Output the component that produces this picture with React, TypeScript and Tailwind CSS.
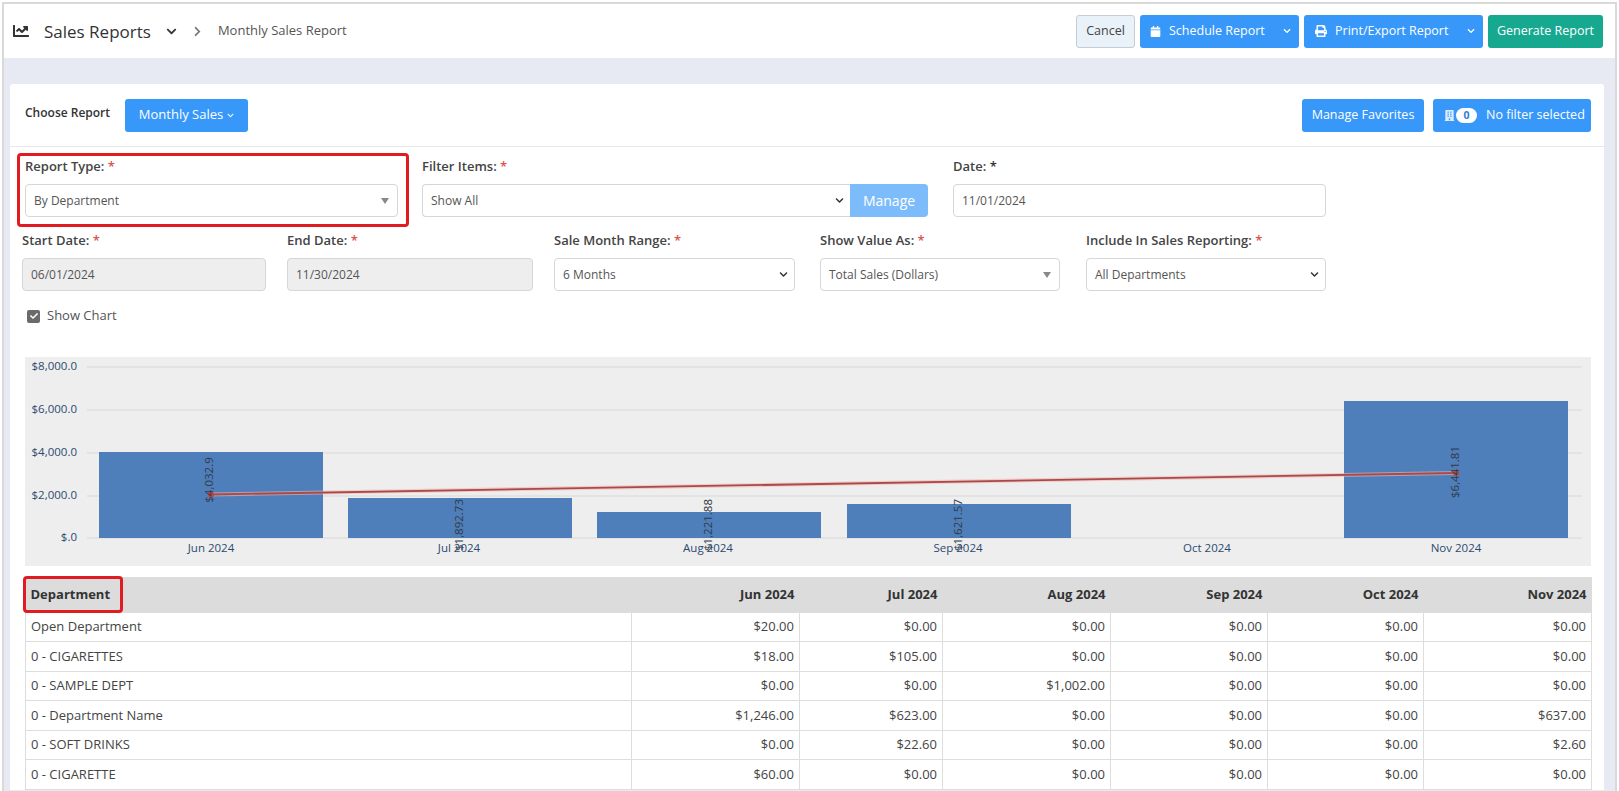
import { FC, ReactNode } from 'react';
import { FaBuilding, FaCalendar, FaChartLine, FaCheck, FaChevronDown, FaChevronRight, FaPrint } from 'react-icons/fa';

const months = ['Jun 2024', 'Jul 2024', 'Aug 2024', 'Sep 2024', 'Oct 2024', 'Nov 2024'];

const rows = [
  ['Open Department', '$20.00', '$0.00', '$0.00', '$0.00', '$0.00', '$0.00'],
  ['0 - CIGARETTES', '$18.00', '$105.00', '$0.00', '$0.00', '$0.00', '$0.00'],
  ['0 - SAMPLE DEPT', '$0.00', '$0.00', '$1,002.00', '$0.00', '$0.00', '$0.00'],
  ['0 - Department Name', '$1,246.00', '$623.00', '$0.00', '$0.00', '$0.00', '$637.00'],
  ['0 - SOFT DRINKS', '$0.00', '$22.60', '$0.00', '$0.00', '$0.00', '$2.60'],
  ['0 - CIGARETTE', '$60.00', '$0.00', '$0.00', '$0.00', '$0.00', '$0.00'],
];

const bars = [
  { x: 74, top: 95, cx: 184, cy: 123, label: '$4,032.9' },
  { x: 323, top: 141, cx: 434, cy: 168, label: '$1,892.73' },
  { x: 572, top: 155, cx: 683, cy: 168, label: '$1,221.88' },
  { x: 822, top: 147, cx: 933, cy: 168, label: '$1,621.57' },
  { x: 1319, top: 44, cx: 1430, cy: 115, label: '$6,441.81' },
];

const Label: FC<{ text: string; star?: string }> = ({ text, star = 'text-[#d9534f]' }) => (
  <div className="h-[18px] text-[13px] leading-[18px] font-semibold text-[#444] whitespace-nowrap">
    {text}: <span className={star}>*</span>
  </div>
);

const Box: FC<{ children: ReactNode; className?: string }> = ({ children, className = '' }) => (
  <div
    className={`mt-[9px] h-[33px] flex items-center justify-between pl-[8px] pr-[6px] border border-[#d6d6d6] rounded-[4px] text-[12px] text-[#555] ${className}`}
  >
    {children}
  </div>
);

const Chevron = () => <FaChevronDown className="text-[9px] text-[#333]" />;
const Caret = () => <span className="mr-[2px] w-0 h-0 border-x-[4px] border-x-transparent border-t-[6px] border-t-[#888]" />;

const Chart = () => (
  <svg viewBox="0 0 1566 209" className="block w-[1566px] h-[209px]" fontFamily="'Open Sans', sans-serif">
    {[10, 53, 96, 139, 181].map((y) => (
      <line key={y} x1="62" x2="1557" y1={y} y2={y} stroke="#d8d8d8" />
    ))}
    {['$8,000.0', '$6,000.0', '$4,000.0', '$2,000.0', '$.0'].map((t, i) => (
      <text key={t} x="52" y={[13, 56, 99, 142, 184][i]} textAnchor="end" fontSize="11.5" fill="#2c4a6e">
        {t}
      </text>
    ))}
    {bars.map((b) => (
      <rect key={b.x} x={b.x} y={b.top} width="224" height={181 - b.top} fill="#4f7fba" />
    ))}
    <line x1="186" y1="137.5" x2="1431" y2="116" stroke="#f3b5b0" strokeWidth="4" opacity="0.6" />
    <line x1="186" y1="137.5" x2="1431" y2="116" stroke="#a84a48" strokeWidth="1.8" />
    <circle cx="186" cy="137.5" r="3" fill="#b8443f" />
    <circle cx="1431" cy="116" r="3" fill="#b8443f" />
    {bars.map((b) => (
      <text
        key={b.label}
        transform={`translate(${b.cx + 4} ${b.cy}) rotate(-90)`}
        textAnchor="middle"
        fontSize="11.5"
        fill="#2f3a48"
      >
        {b.label}
      </text>
    ))}
    {months.map((m, i) => (
      <text key={m} x={[186, 434, 683, 933, 1182, 1431][i]} y="195" textAnchor="middle" fontSize="11.5" fill="#2c4a6e">
        {m}
      </text>
    ))}
  </svg>
);

export default function App() {
  return (
    <div className="h-[791px] w-[1619px] overflow-hidden bg-white font-['Open_Sans',sans-serif]">
      <div className="h-[789px] w-[1615px] ml-[2px] mt-[2px] overflow-hidden border-[2px] border-b-0 border-[#d9d9d9] bg-[#e8eaf3]">
        <div className="h-[54px] bg-white flex items-center justify-between pl-[9px] pr-[12px]">
          <div className="flex items-center text-[#333]">
            <FaChartLine className="text-[16px] -mt-[1px]" />
            <span className="ml-[15px] text-[17px] leading-none">Sales Reports</span>
            <FaChevronDown className="ml-[15px] text-[11px]" />
            <FaChevronRight className="ml-[15px] text-[11px] text-[#777]" />
            <span className="ml-[15px] text-[13px] text-[#555]">Monthly Sales Report</span>
          </div>
          <div className="flex items-center gap-[5px] text-[12.5px] text-white">
            <button className="h-[33px] w-[59px] rounded-[3px] border border-[#c5ccd4] bg-[#e9f1f9] text-[#444]">Cancel</button>
            <button className="h-[33px] w-[159px] rounded-[3px] bg-[#3798f9] flex items-center pl-[10px] pr-[8px]">
              <FaCalendar className="text-[11px]" />
              <span className="ml-[8px]">Schedule Report</span>
              <FaChevronDown className="ml-auto text-[8px]" />
            </button>
            <button className="h-[33px] w-[179px] rounded-[3px] bg-[#3798f9] flex items-center pl-[11px] pr-[8px]">
              <FaPrint className="text-[12px]" />
              <span className="ml-[8px]">Print/Export Report</span>
              <FaChevronDown className="ml-auto text-[8px]" />
            </button>
            <button className="h-[33px] w-[115px] rounded-[3px] bg-[#17a990]">Generate Report</button>
          </div>
        </div>

        <div className="mt-[26px] ml-[6px] w-[1594px] bg-white rounded-t-[3px]">
          <div className="h-[63px] flex items-center justify-between border-b border-[#e8e8e8] pl-[15px] pr-[13px]">
            <div className="flex items-center">
              <span className="text-[12px] font-semibold text-[#333] -mt-[4px]">Choose Report</span>
              <button className="ml-[15px] h-[33px] w-[123px] rounded-[3px] bg-[#3798f9] text-[13px] text-white flex items-center justify-center gap-[4px]">
                Monthly Sales <FaChevronDown className="text-[7px]" />
              </button>
            </div>
            <div className="flex items-center gap-[9px] text-[12.5px] text-white">
              <button className="h-[33px] w-[122px] rounded-[3px] bg-[#3798f9]">Manage Favorites</button>
              <button className="h-[33px] w-[158px] rounded-[3px] bg-[#3798f9] flex items-center pl-[11px]">
                <FaBuilding className="text-[11px] text-[#dfeeff]" />
                <span className="ml-[1px] h-[15px] w-[21px] rounded-full bg-white text-[#2c7fd6] text-[10.5px] leading-[15px] font-bold">0</span>
                <span className="ml-[9px]">No filter selected</span>
              </button>
            </div>
          </div>

          <div className="mt-[6px] ml-[7px] flex">
            <div className="w-[392px] h-[74px] border-[3px] border-[#e01b22] rounded-[4px] pl-[5px] pr-[8px] pt-[1px]">
              <Label text="Report Type" />
              <Box>
                By Department
                <Caret />
              </Box>
            </div>
            <div className="ml-[13px] w-[506px] pt-[4px]">
              <Label text="Filter Items" />
              <div className="mt-[9px] h-[33px] flex">
                <div className="flex-1 flex items-center justify-between pl-[8px] pr-[6px] border border-r-0 border-[#d6d6d6] rounded-l-[4px] text-[12px] text-[#555]">
                  Show All
                  <Chevron />
                </div>
                <button className="w-[78px] rounded-r-[4px] bg-[#7dbcfb] text-[14px] text-white">Manage</button>
              </div>
            </div>
            <div className="ml-[25px] w-[373px] pt-[4px]">
              <Label text="Date" star="text-[#333]" />
              <Box>11/01/2024</Box>
            </div>
          </div>

          <div className="mt-[4px] ml-[12px] flex">
            <div className="w-[244px]">
              <Label text="Start Date" />
              <Box className="bg-[#eeeeee]">06/01/2024</Box>
            </div>
            <div className="ml-[21px] w-[246px]">
              <Label text="End Date" />
              <Box className="bg-[#eeeeee]">11/30/2024</Box>
            </div>
            <div className="ml-[21px] w-[241px]">
              <Label text="Sale Month Range" />
              <Box>
                6 Months
                <Chevron />
              </Box>
            </div>
            <div className="ml-[25px] w-[240px]">
              <Label text="Show Value As" />
              <Box>
                Total Sales (Dollars)
                <Caret />
              </Box>
            </div>
            <div className="ml-[26px] w-[240px]">
              <Label text="Include In Sales Reporting" />
              <Box>
                All Departments
                <Chevron />
              </Box>
            </div>
          </div>

          <div className="mt-[16px] ml-[17px] h-[18px] flex items-center text-[13px] text-[#555]">
            <span className="w-[13px] h-[13px] rounded-[2px] bg-[#6b6b6b] flex items-center justify-center">
              <FaCheck className="text-[8px] text-white" />
            </span>
            <span className="ml-[7px]">Show Chart</span>
          </div>

          <div className="mt-[32px] ml-[15px] w-[1566px] bg-[#eeeeee]">
            <Chart />
          </div>

          <div className="relative mt-[11px] ml-[15px] w-[1566px]">
            <table className="w-full table-fixed border-collapse text-[13px] text-[#444]">
              <colgroup>
                <col className="w-[606px]" />
                <col className="w-[168px]" />
                <col className="w-[143px]" />
                <col className="w-[168px]" />
                <col className="w-[157px]" />
                <col className="w-[156px]" />
                <col className="w-[168px]" />
              </colgroup>
              <thead>
                <tr className="h-[35px] bg-[#dcdcdc] text-[#333]">
                  <th className="px-[5px] text-left font-bold">Department</th>
                  {months.map((m) => (
                    <th key={m} className="px-[5px] text-right font-bold">
                      {m}
                    </th>
                  ))}
                </tr>
              </thead>
              <tbody>
                {rows.map((row) => (
                  <tr key={row[0]} className="h-[29.5px]">
                    {row.map((cell, i) => (
                      <td
                        key={i}
                        className={`border border-[#dddddd] px-[5px] ${i === 0 ? 'text-left' : 'text-right'}`}
                      >
                        {cell}
                      </td>
                    ))}
                  </tr>
                ))}
              </tbody>
            </table>
            <div className="absolute -left-[2px] -top-[1px] w-[100px] h-[37px] border-[3px] border-[#e01b22] rounded-[4px]" />
          </div>
        </div>
      </div>
    </div>
  );
}
